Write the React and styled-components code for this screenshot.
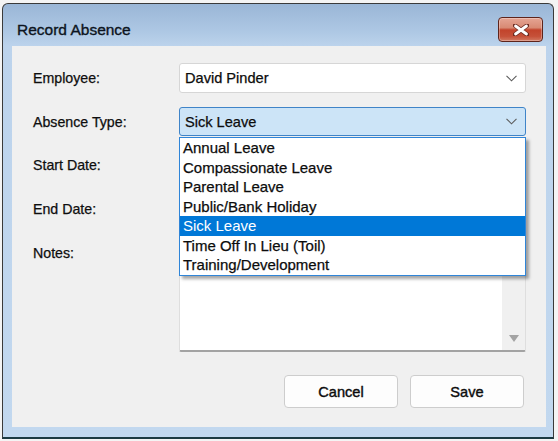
import React from 'react'
import styled, { createGlobalStyle } from 'styled-components'

const GlobalStyle = createGlobalStyle`
  body {
    margin: 0;
    background: #f4f4f4;
    font-family: "Liberation Sans", Arial, sans-serif;
    -webkit-text-stroke: 0.25px currentColor;
  }
`

const absenceTypes = [
  'Annual Leave',
  'Compassionate Leave',
  'Parental Leave',
  'Public/Bank Holiday',
  'Sick Leave',
  'Time Off In Lieu (Toil)',
  'Training/Development'
]

const Window = styled.div`
  box-sizing: border-box;
  width: 552px;
  height: 436px;
  margin: 3px 0 0 2px;
  border: 1px solid #3a3a3a;
  border-bottom: 2px solid #1c3a42;
  border-radius: 6px 6px 0 0;
  background: linear-gradient(#9ab6d6 0, #aec8e4 28px, #bcd3ec 42px, #c2d8ef 100%);
  display: flex;
  flex-direction: column;
  padding: 0 7px 10px 9px;
`

const TitleBar = styled.div`
  height: 42px;
  box-sizing: border-box;
  padding: 13px 3px 0 5px;
  display: flex;
  align-items: flex-start;
  justify-content: space-between;
`

const Title = styled.div`
  font-size: 15.5px;
  line-height: 26px;
  color: #0c1420;
  -webkit-text-stroke: 0.35px currentColor;
`

const CloseButton = styled.div`
  box-sizing: border-box;
  width: 45px;
  height: 25px;
  border: 1px solid #5e241b;
  border-radius: 4px;
  background: linear-gradient(#e5a594 0, #d88a74 42%, #c2432b 52%, #c65139 80%, #d27a62 100%);
  box-shadow: inset 0 0 0 1px rgba(255, 255, 255, 0.3);
  display: flex;
  align-items: center;
  justify-content: center;
`

const Client = styled.div`
  flex: 1;
  background: #f0f0f0;
  padding: 17px 20px 19px 21px;
  display: flex;
  flex-direction: column;
`

const Form = styled.div`
  display: grid;
  grid-template-columns: 146px 347px;
  grid-template-rows: 30px 29px 30px 30px 114px;
  row-gap: 14px;
`

const Label = styled.div`
  font-size: 14.2px;
  line-height: 30px;
  color: #0e0e0e;
`

const Combo = styled.div`
  position: relative;
  box-sizing: border-box;
  height: 100%;
  border: 1px solid ${p => (p.focused ? '#3f84c8' : '#d6d6d6')};
  border-radius: 3px;
  background: ${p => (p.focused ? '#cce4f7' : '#ffffff')};
  display: flex;
  align-items: center;
  justify-content: space-between;
  padding: 0 8px 0 5px;
  font-size: 14.6px;
  color: #0c0c0c;
`

const DropList = styled.div`
  position: absolute;
  top: calc(100% + 2px);
  left: -1px;
  right: -1px;
  z-index: 5;
  background: #fff;
  border: 1px solid #2f85d8;
  box-shadow: 3px 3px 3px rgba(0, 0, 0, 0.35);
`

const DropItem = styled.div`
  height: 19.5px;
  line-height: 19.5px;
  padding-left: 3px;
  font-size: 15px;
  color: ${p => (p.selected ? '#ffffff' : '#0c0c0c')};
  background: ${p => (p.selected ? '#0078d7' : 'transparent')};
  -webkit-text-stroke: ${p => (p.selected ? '0' : '0.25px currentColor')};
`

const DateBox = styled.div`
  box-sizing: border-box;
  height: 100%;
  border: 1px solid #d6d6d6;
  border-radius: 3px;
  background: #fff;
`

const NotesBox = styled.div`
  box-sizing: border-box;
  height: 100%;
  border: 1px solid #dedede;
  border-bottom: 2px solid #a3a3a3;
  border-radius: 2px;
  background: #fff;
  display: flex;
`

const NotesText = styled.div`
  flex: 1;
`

const ScrollTrack = styled.div`
  width: 23px;
  background: #f0f0f0;
  display: flex;
  align-items: flex-end;
  justify-content: center;
  padding-bottom: 8px;
`

const ButtonRow = styled.div`
  margin-top: auto;
  display: flex;
  justify-content: flex-end;
  gap: 12px;
  padding-right: 2px;
`

const Button = styled.div`
  box-sizing: border-box;
  width: 114px;
  height: 33px;
  border: 1px solid #cdcdcd;
  border-radius: 4px;
  background: #fdfdfd;
  display: flex;
  align-items: center;
  justify-content: center;
  font-size: 14.6px;
  color: #0c0c0c;
  -webkit-text-stroke: 0.4px currentColor;
`

const Chevron = () => (
  <svg width="11" height="7" viewBox="0 0 11 7">
    <polyline points="0.5,0.8 5.5,5.8 10.5,0.8" fill="none" stroke="#5c5c5c" strokeWidth="1.1" />
  </svg>
)

const CloseX = () => (
  <svg width="16" height="12" viewBox="0 0 16 12">
    <path d="M2 1.5 L14 10.5 M14 1.5 L2 10.5" stroke="#6b2a20" strokeWidth="4.4" strokeLinecap="round" />
    <path d="M2.5 2 L13.5 10 M13.5 2 L2.5 10" stroke="#ffffff" strokeWidth="2.8" strokeLinecap="round" />
  </svg>
)

const DownArrow = () => (
  <svg width="10" height="7" viewBox="0 0 10 7">
    <polygon points="0,0 10,0 5,7" fill="#a3a3a3" />
  </svg>
)

export default function App() {
  const selected = 'Sick Leave'
  return (
    <>
      <GlobalStyle />
      <Window>
        <TitleBar>
          <Title>Record Absence</Title>
          <CloseButton>
            <CloseX />
          </CloseButton>
        </TitleBar>
        <Client>
          <Form>
            <Label>Employee:</Label>
            <Combo>
              David Pinder
              <Chevron />
            </Combo>

            <Label>Absence Type:</Label>
            <Combo focused>
              {selected}
              <Chevron />
              <DropList>
                {absenceTypes.map(item => (
                  <DropItem key={item} selected={item === selected}>{item}</DropItem>
                ))}
              </DropList>
            </Combo>

            <Label>Start Date:</Label>
            <DateBox />

            <Label>End Date:</Label>
            <DateBox />

            <Label>Notes:</Label>
            <NotesBox>
              <NotesText />
              <ScrollTrack>
                <DownArrow />
              </ScrollTrack>
            </NotesBox>
          </Form>
          <ButtonRow>
            <Button>Cancel</Button>
            <Button>Save</Button>
          </ButtonRow>
        </Client>
      </Window>
    </>
  )
}
